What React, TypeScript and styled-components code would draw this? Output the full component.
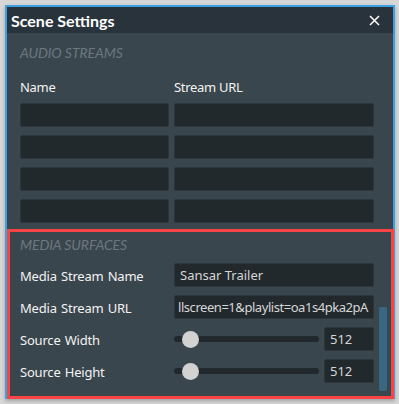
import React from "react";
import styled, { createGlobalStyle } from "styled-components";

const Global = createGlobalStyle`
  html, body { margin: 0; padding: 0; background: #d7d7d7; }
  body { font-family: "Noto Sans", "Liberation Sans", sans-serif; }
  * { box-sizing: border-box; }
`;

const Page = styled.div`
  width: 399px;
  height: 404px;
  padding: 5px 4px 0 5px;
  overflow: hidden;
`;

const Window = styled.div`
  width: 390px;
  height: 394px;
  border: 2px solid #3ba1e2;
  border-bottom: none;
  background: #3a464d;
  display: flex;
  flex-direction: column;
  box-shadow: 0 2px 4px rgba(0, 0, 0, 0.25);
`;

const TitleBar = styled.div`
  height: 26px;
  flex: none;
  background: #29333b;
  display: flex;
  align-items: center;
  justify-content: space-between;
  padding: 0 13px 0 4px;
  color: #ffffff;
  font-family: Lato, "Noto Sans", sans-serif;
  font-weight: 700;
  font-size: 16px;
`;

const Close = styled.svg`
  width: 11px;
  height: 11px;
  display: block;
`;

const Section = styled.section`
  padding: 10px 19px 6px 13px;
`;

const SectionTitle = styled.div`
  height: 20px;
  line-height: 20px;
  font-style: italic;
  font-size: 14px;
  color: #6c7880;
  font-family: Lato, "Noto Sans", sans-serif;
  letter-spacing: -0.1px;
`;

const StreamGrid = styled.div`
  margin-top: 14px;
  display: grid;
  grid-template-columns: 149px 200px;
  column-gap: 5px;
  row-gap: 8px;
`;

const ColLabel = styled.div`
  height: 20px;
  line-height: 20px;
  color: #f2f2f2;
  font-size: 13px;
  letter-spacing: -0.3px;
  margin-bottom: -2px;
`;

const Field = styled.div<{ $w?: number }>`
  height: 24px;
  width: ${(p) => (p.$w ? `${p.$w}px` : "auto")};
  background: #22292d;
  border: 1px solid #2c353a;
  border-radius: 2px;
  color: #d6d6d6;
  font-size: 13px;
  line-height: 22px;
  padding: 0 5px;
  white-space: nowrap;
  overflow: hidden;
`;

const UrlField = styled(Field)`
  padding: 0 0 0 3px;
  letter-spacing: -0.45px;
`;

const Media = styled.section`
  position: relative;
  flex: 1;
  border: 3px solid #fa4444;
  margin-right: -1px;
  padding: 3px 19px 13px 10px;
`;

const Rows = styled.div`
  margin-top: 8px;
  display: grid;
  grid-template-columns: 154px 200px;
  row-gap: 8px;
  align-items: center;
`;

const Label = styled.div`
  color: #f2f2f2;
  font-size: 13px;
  letter-spacing: -0.2px;
  word-spacing: 1px;
  padding-top: 2px;
  white-space: nowrap;
`;

const SliderRow = styled.div`
  display: flex;
  align-items: center;
  gap: 5px;
`;

const Track = styled.div`
  position: relative;
  width: 145px;
  height: 6px;
  border-radius: 3px;
  background: #22292d;
`;

const Thumb = styled.div`
  position: absolute;
  top: 50%;
  width: 17px;
  height: 17px;
  margin-top: -8.5px;
  margin-left: -8.5px;
  border-radius: 50%;
  background: #d2d2d2;
`;

const Scrollbar = styled.div`
  position: absolute;
  right: 4px;
  top: 75px;
  width: 8px;
  height: 84px;
  border-radius: 2px;
  background: #386781;
`;

const streams = [0, 1, 2, 3];

function Slider({ value, max }: { value: number; max: number }) {
  return (
    <SliderRow>
      <Track>
        <Thumb style={{ left: `${(value / max) * 145}px` }} />
      </Track>
      <Field $w={50}>512</Field>
    </SliderRow>
  );
}

export default function App() {
  return (
    <>
      <Global />
      <Page>
        <Window>
          <TitleBar>
            <span>Scene Settings</span>
            <Close viewBox="0 0 11 11">
              <path d="M1 1 L10 10 M10 1 L1 10" stroke="#fff" strokeWidth="1.5" />
            </Close>
          </TitleBar>
          <Section>
            <SectionTitle>AUDIO STREAMS</SectionTitle>
            <StreamGrid>
              <ColLabel>Name</ColLabel>
              <ColLabel>Stream URL</ColLabel>
              {streams.map((i) => (
                <React.Fragment key={i}>
                  <Field />
                  <Field />
                </React.Fragment>
              ))}
            </StreamGrid>
          </Section>
          <Media>
            <SectionTitle>MEDIA SURFACES</SectionTitle>
            <Rows>
              <Label>Media Stream Name</Label>
              <Field>Sansar Trailer</Field>
              <Label>Media Stream URL</Label>
              <UrlField>llscreen=1&amp;playlist=oa1s4pka2pA</UrlField>
              <Label>Source Width</Label>
              <Slider value={16} max={145} />
              <Label>Source Height</Label>
              <Slider value={16} max={145} />
            </Rows>
            <Scrollbar />
          </Media>
        </Window>
      </Page>
    </>
  );
}
